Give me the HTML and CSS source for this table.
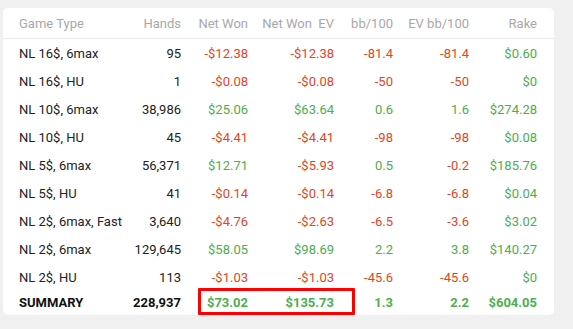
FILE: index.html
```html
<!DOCTYPE html>
<html>
<head>
<meta charset="utf-8">
<link rel="stylesheet" href="styles.css">
</head>
<body>
<div class="card">
  <div class="grid">
    <div class="row head">
      <div class="c l">Game Type</div><div class="c">Hands</div><div class="c">Net Won</div><div class="c">Net Won&nbsp; EV</div><div class="c">bb/100</div><div class="c">EV bb/100</div><div class="c">Rake</div>
    </div>
    <div class="row">
      <div class="c l">NL 16$, 6max</div><div class="c">95</div><div class="c neg">-$12.38</div><div class="c neg">-$12.38</div><div class="c neg">-81.4</div><div class="c neg">-81.4</div><div class="c pos">$0.60</div>
    </div>
    <div class="row">
      <div class="c l">NL 16$, HU</div><div class="c">1</div><div class="c neg">-$0.08</div><div class="c neg">-$0.08</div><div class="c neg">-50</div><div class="c neg">-50</div><div class="c pos">$0</div>
    </div>
    <div class="row">
      <div class="c l">NL 10$, 6max</div><div class="c">38,986</div><div class="c pos">$25.06</div><div class="c pos">$63.64</div><div class="c pos">0.6</div><div class="c pos">1.6</div><div class="c pos">$274.28</div>
    </div>
    <div class="row">
      <div class="c l">NL 10$, HU</div><div class="c">45</div><div class="c neg">-$4.41</div><div class="c neg">-$4.41</div><div class="c neg">-98</div><div class="c neg">-98</div><div class="c pos">$0.08</div>
    </div>
    <div class="row">
      <div class="c l">NL 5$, 6max</div><div class="c">56,371</div><div class="c pos">$12.71</div><div class="c neg">-$5.93</div><div class="c pos">0.5</div><div class="c neg">-0.2</div><div class="c pos">$185.76</div>
    </div>
    <div class="row">
      <div class="c l">NL 5$, HU</div><div class="c">41</div><div class="c neg">-$0.14</div><div class="c neg">-$0.14</div><div class="c neg">-6.8</div><div class="c neg">-6.8</div><div class="c pos">$0.04</div>
    </div>
    <div class="row">
      <div class="c l">NL 2$, 6max, Fast</div><div class="c">3,640</div><div class="c neg">-$4.76</div><div class="c neg">-$2.63</div><div class="c neg">-6.5</div><div class="c neg">-3.6</div><div class="c pos">$3.02</div>
    </div>
    <div class="row">
      <div class="c l">NL 2$, 6max</div><div class="c">129,645</div><div class="c pos">$58.05</div><div class="c pos">$98.69</div><div class="c pos">2.2</div><div class="c pos">3.8</div><div class="c pos">$140.27</div>
    </div>
    <div class="row">
      <div class="c l">NL 2$, HU</div><div class="c">113</div><div class="c neg">-$1.03</div><div class="c neg">-$1.03</div><div class="c neg">-45.6</div><div class="c neg">-45.6</div><div class="c pos">$0</div>
    </div>
    <div class="row sum">
      <div class="c l">SUMMARY</div><div class="c">228,937</div><div class="c pos">$73.02</div><div class="c pos">$135.73</div><div class="c pos">1.3</div><div class="c pos">2.2</div><div class="c pos">$604.05</div>
    </div>
  </div>
  <div class="highlight"></div>
</div>
</body>
</html>
```
FILE: styles.css
```css
html, body {
  margin: 0;
  padding: 0;
  background: #f0f0f0;
}
body {
  padding: 8px 0 0 3px;
  font-family: Roboto, "Liberation Sans", sans-serif;
  font-size: 13px;
  color: #222;
}
.card {
  position: relative;
  width: 551px;
  height: 307px;
  box-sizing: border-box;
  background: #fff;
  border-radius: 5px;
  padding: 0 17px 0 16px;
}
.grid {
  display: flex;
  flex-direction: column;
}
.row {
  display: grid;
  grid-template-columns: 100px 62px 67px 86px 59px 76px 68px;
  height: 28px;
  align-items: center;
}
.row.head {
  height: 30px;
  color: #a8a8a8;
  border-bottom: 1px solid #ececec;
  margin: 0 -17px 0 -16px;
  padding: 0 17px 0 16px;
  height: 29px;
  padding-top: 1px;
}
.row.sum {
  height: 22px;
  font-weight: bold;
  color: #111;
}
.c {
  text-align: right;
  white-space: nowrap;
}
.c.l {
  text-align: left;
}
.neg { color: #e2461d; }
.pos { color: #4cae4c; }
.row.sum .pos { color: #4caf50; }
.highlight {
  position: absolute;
  left: 195px;
  top: 280px;
  width: 157px;
  height: 27px;
  box-sizing: border-box;
  border: 3px solid #ff0000;
  border-radius: 1px;
}
```
